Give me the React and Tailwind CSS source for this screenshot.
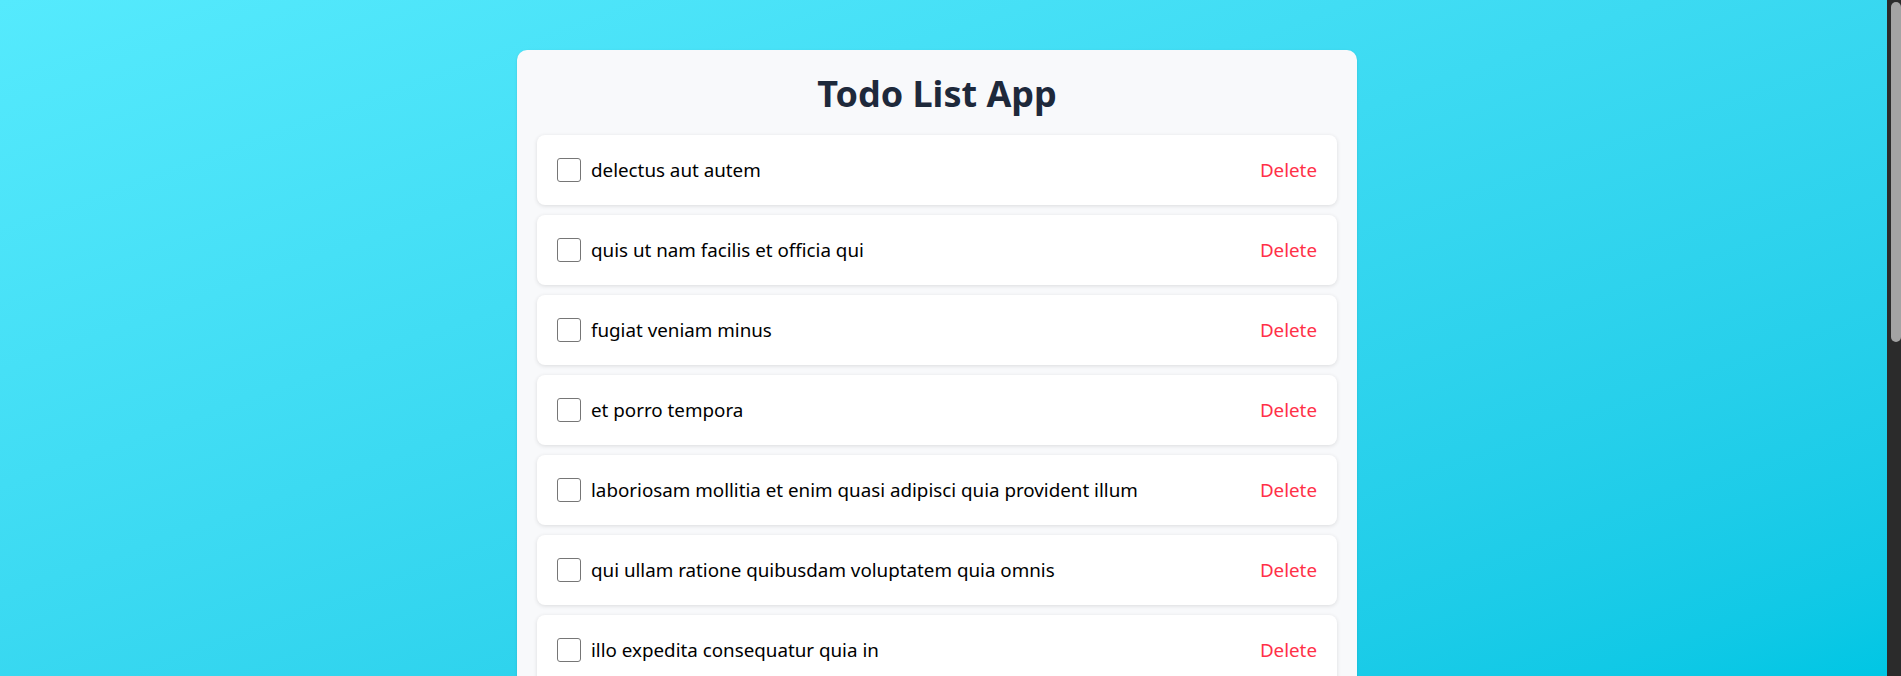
import { useState } from 'react';

const initialTodos = [
  { id: 1, title: 'delectus aut autem' },
  { id: 2, title: 'quis ut nam facilis et officia qui' },
  { id: 3, title: 'fugiat veniam minus' },
  { id: 4, title: 'et porro tempora' },
  { id: 5, title: 'laboriosam mollitia et enim quasi adipisci quia provident illum' },
  { id: 6, title: 'qui ullam ratione quibusdam voluptatem quia omnis' },
  { id: 7, title: 'illo expedita consequatur quia in' },
  { id: 8, title: 'quo adipisci enim quam ut ab' },
  { id: 9, title: 'molestiae perspiciatis ipsa' },
  { id: 10, title: 'illo est ratione doloremque quia maiores aut' },
  { id: 11, title: 'vero rerum temporibus dolor' },
  { id: 12, title: 'ipsa repellendus fugit nisi' },
  { id: 13, title: 'et doloremque nulla' },
  { id: 14, title: 'repellendus sunt dolores architecto voluptatum' },
  { id: 15, title: 'ab voluptatum amet voluptas' },
];

export default function App() {
  const [todos, setTodos] = useState(initialTodos);
  const [done, setDone] = useState({});

  const removeTodo = (id) => setTodos(prev => prev.filter(t => t.id !== id));

  return (
    <div className="h-screen flex font-['Segoe_UI','Noto_Sans',sans-serif]">
      <div className="flex-1 overflow-y-auto [scrollbar-width:none] bg-linear-to-br from-[#55eafd] to-[#00c6e4]">
        <div className="pt-[50px] pb-12 pr-[13px]">
          <div className="w-[840px] mx-auto bg-[#f8f9fb] rounded-[10px] px-5 pt-6 pb-5 shadow-sm">
            <h1 className="text-[36px] leading-[40px] font-bold text-[#1e293b] text-center mb-[21px]">Todo List App</h1>
            <ul className="flex flex-col gap-[10px]">
              {todos.map(todo => (
                <li key={todo.id} className="h-[70px] bg-white rounded-lg shadow-[0_1px_4px_rgba(0,0,0,0.12)] flex items-center justify-between px-5">
                  <label className="flex items-center gap-[10px] text-[18.8px] text-black">
                    <input
                      type="checkbox"
                      checked={!!done[todo.id]}
                      onChange={() => setDone(d => ({ ...d, [todo.id]: !d[todo.id] }))}
                      className="w-6 h-6 appearance-none border border-[#767676] rounded-[3px] bg-white"
                    />
                    <span className={done[todo.id] ? 'line-through text-gray-400' : ''}>{todo.title}</span>
                  </label>
                  <button onClick={() => removeTodo(todo.id)} className="text-[18.8px] text-[#ff3048]">Delete</button>
                </li>
              ))}
            </ul>
          </div>
        </div>
      </div>
      {/* scrollbar strip as seen in the screenshot */}
      <div className="w-[14px] bg-[#2b2b2b] pl-[4px] pt-[2px]">
        <div className="h-[340px] bg-[#a3a3a3] rounded-full"></div>
      </div>
    </div>
  );
}
